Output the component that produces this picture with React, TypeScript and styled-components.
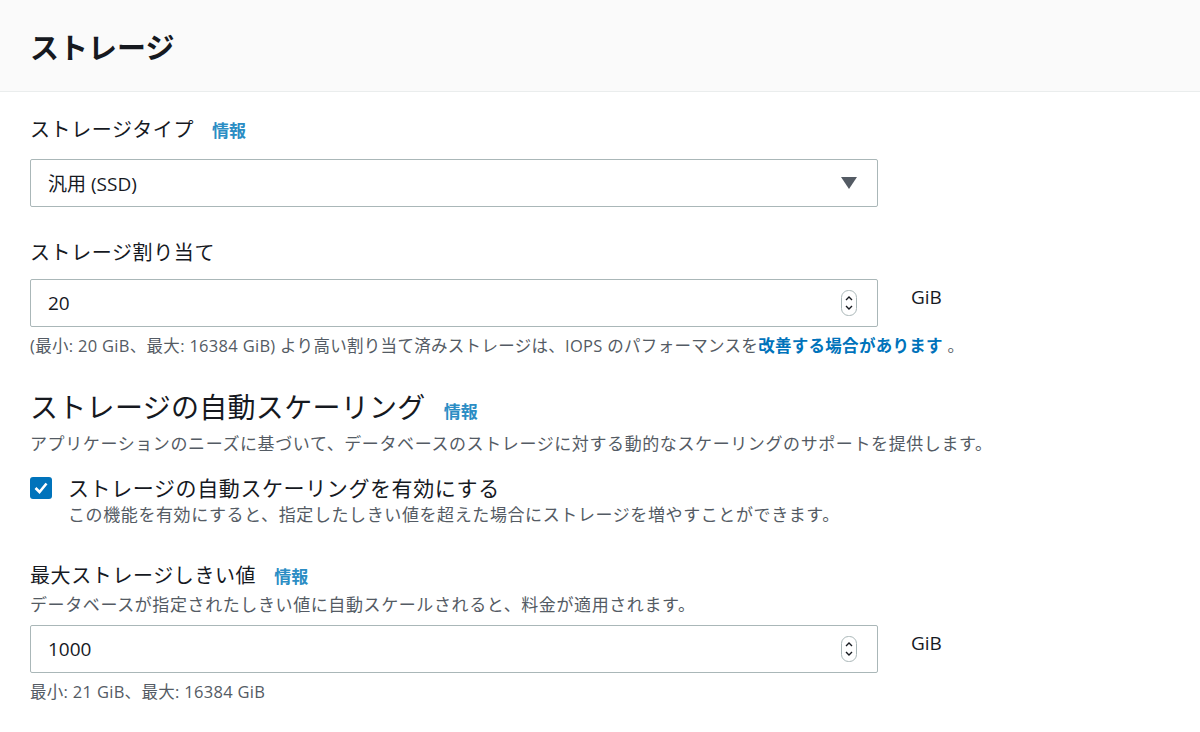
import styled, { createGlobalStyle } from 'styled-components';

const Global = createGlobalStyle`
  body {
    margin: 0;
    background: #fff;
    font-family: "Open Sans", "Noto Sans CJK JP", sans-serif;
    color: #16191f;
  }
`;

const Header = styled.header`
  height: 92px;
  background: #fafafa;
  border-bottom: 1px solid #eaeded;
  display: flex;
  align-items: center;
  padding: 0 30px;
  box-sizing: border-box;
`;

const Title = styled.h2`
  margin: 0;
  font-size: 29px;
  font-weight: 700;
`;

const Body = styled.section`
  padding: 22px 30px 0;
  display: flex;
  flex-direction: column;
`;

const Field = styled.div<{ $gap?: number }>`
  display: flex;
  flex-direction: column;
  margin-bottom: ${(p) => p.$gap ?? 0}px;
`;

const Label = styled.div<{ $size?: number; $line?: number }>`
  font-size: ${(p) => p.$size ?? 20}px;
  line-height: ${(p) => p.$line ?? 32}px;
  letter-spacing: 0.6px;
  display: flex;
  align-items: baseline;
  gap: 18px;
`;

const Info = styled.span`
  font-size: 17px;
  font-weight: 700;
  color: #2b8dc4;
  letter-spacing: 0;
`;

const Desc = styled.div`
  font-size: 17px;
  color: #545b64;
  line-height: 24px;
  letter-spacing: 0.6px;
`;

const Row = styled.div<{ $mt: number }>`
  display: flex;
  align-items: flex-start;
  gap: 33px;
  margin-top: ${(p) => p.$mt}px;
`;

const Box = styled.div`
  width: 848px;
  height: 48px;
  box-sizing: border-box;
  border: 1px solid #aab7b8;
  border-radius: 2px;
  display: flex;
  align-items: center;
  justify-content: space-between;
  padding: 0 20px 0 17px;
  font-size: 19px;
`;

const Unit = styled.span`
  font-size: 19px;
  padding-top: 5px;
`;

const Hint = styled.div`
  font-size: 16.5px;
  color: #545b64;
  margin-top: 7px;
  line-height: 24px;
  letter-spacing: 0.3px;
`;

const Link = styled.span`
  color: #0073bb;
  font-weight: 700;
`;

const Heading = styled.h3`
  margin: 0;
  font-size: 28px;
  font-weight: 400;
  line-height: 40px;
  letter-spacing: 0.3px;
  display: flex;
  align-items: baseline;
  gap: 18px;
`;

const CheckRow = styled.div`
  display: flex;
  gap: 16px;
  margin-top: 17px;
`;

const Check = styled.div`
  width: 22px;
  height: 22px;
  flex: none;
  margin-top: 4px;
  border-radius: 3px;
  background: #0073bb;
  display: flex;
  align-items: center;
  justify-content: center;
`;

const CheckText = styled.div`
  width: 800px;
`;

const Spinner = () => (
  <svg width="16" height="26" viewBox="0 0 16 26">
    <rect x="0.5" y="0.5" width="15" height="25" rx="7" fill="#fff" stroke="#aab7b8" />
    <path d="M5 10 L8 7 L11 10" fill="none" stroke="#16191f" strokeWidth="1.4" />
    <path d="M5 16 L8 19 L11 16" fill="none" stroke="#16191f" strokeWidth="1.4" />
  </svg>
);

export default function App() {
  return (
    <>
      <Global />
      <Header>
        <Title>ストレージ</Title>
      </Header>
      <Body>
        <Field $gap={30}>
          <Label>
            ストレージタイプ <Info>情報</Info>
          </Label>
          <Row $mt={12}>
            <Box>
              汎用 (SSD)
              <svg width="16" height="12" viewBox="0 0 16 12">
                <path d="M0 0 H16 L8 12 Z" fill="#545b64" />
              </svg>
            </Box>
          </Row>
        </Field>
        <Field $gap={29}>
          <Label>ストレージ割り当て</Label>
          <Row $mt={10}>
            <Box>
              20
              <Spinner />
            </Box>
            <Unit>GiB</Unit>
          </Row>
          <Hint>
            (最小: 20 GiB、最大: 16384 GiB) より高い割り当て済みストレージは、IOPS のパフォーマンスを
            <Link>改善する場合があります</Link> 。
          </Hint>
        </Field>
        <Field $gap={33}>
          <Heading>
            ストレージの自動スケーリング <Info>情報</Info>
          </Heading>
          <Desc>
            アプリケーションのニーズに基づいて、データベースのストレージに対する動的なスケーリングのサポートを提供します。
          </Desc>
          <CheckRow>
            <Check>
              <svg width="14" height="12" viewBox="0 0 14 12">
                <path d="M1.5 6 L5.5 10 L12.5 1.5" fill="none" stroke="#fff" strokeWidth="2.6" />
              </svg>
            </Check>
            <CheckText>
              <Label $size={21} $line={30}>ストレージの自動スケーリングを有効にする</Label>
              <Desc>
                この機能を有効にすると、指定したしきい値を超えた場合にストレージを増やすことができます。
              </Desc>
            </CheckText>
          </CheckRow>
        </Field>
        <Field>
          <Label>
            最大ストレージしきい値 <Info>情報</Info>
          </Label>
          <Desc>データベースが指定されたしきい値に自動スケールされると、料金が適用されます。</Desc>
          <Row $mt={8}>
            <Box>
              1000
              <Spinner />
            </Box>
            <Unit>GiB</Unit>
          </Row>
          <Hint>最小: 21 GiB、最大: 16384 GiB</Hint>
        </Field>
      </Body>
    </>
  );
}
